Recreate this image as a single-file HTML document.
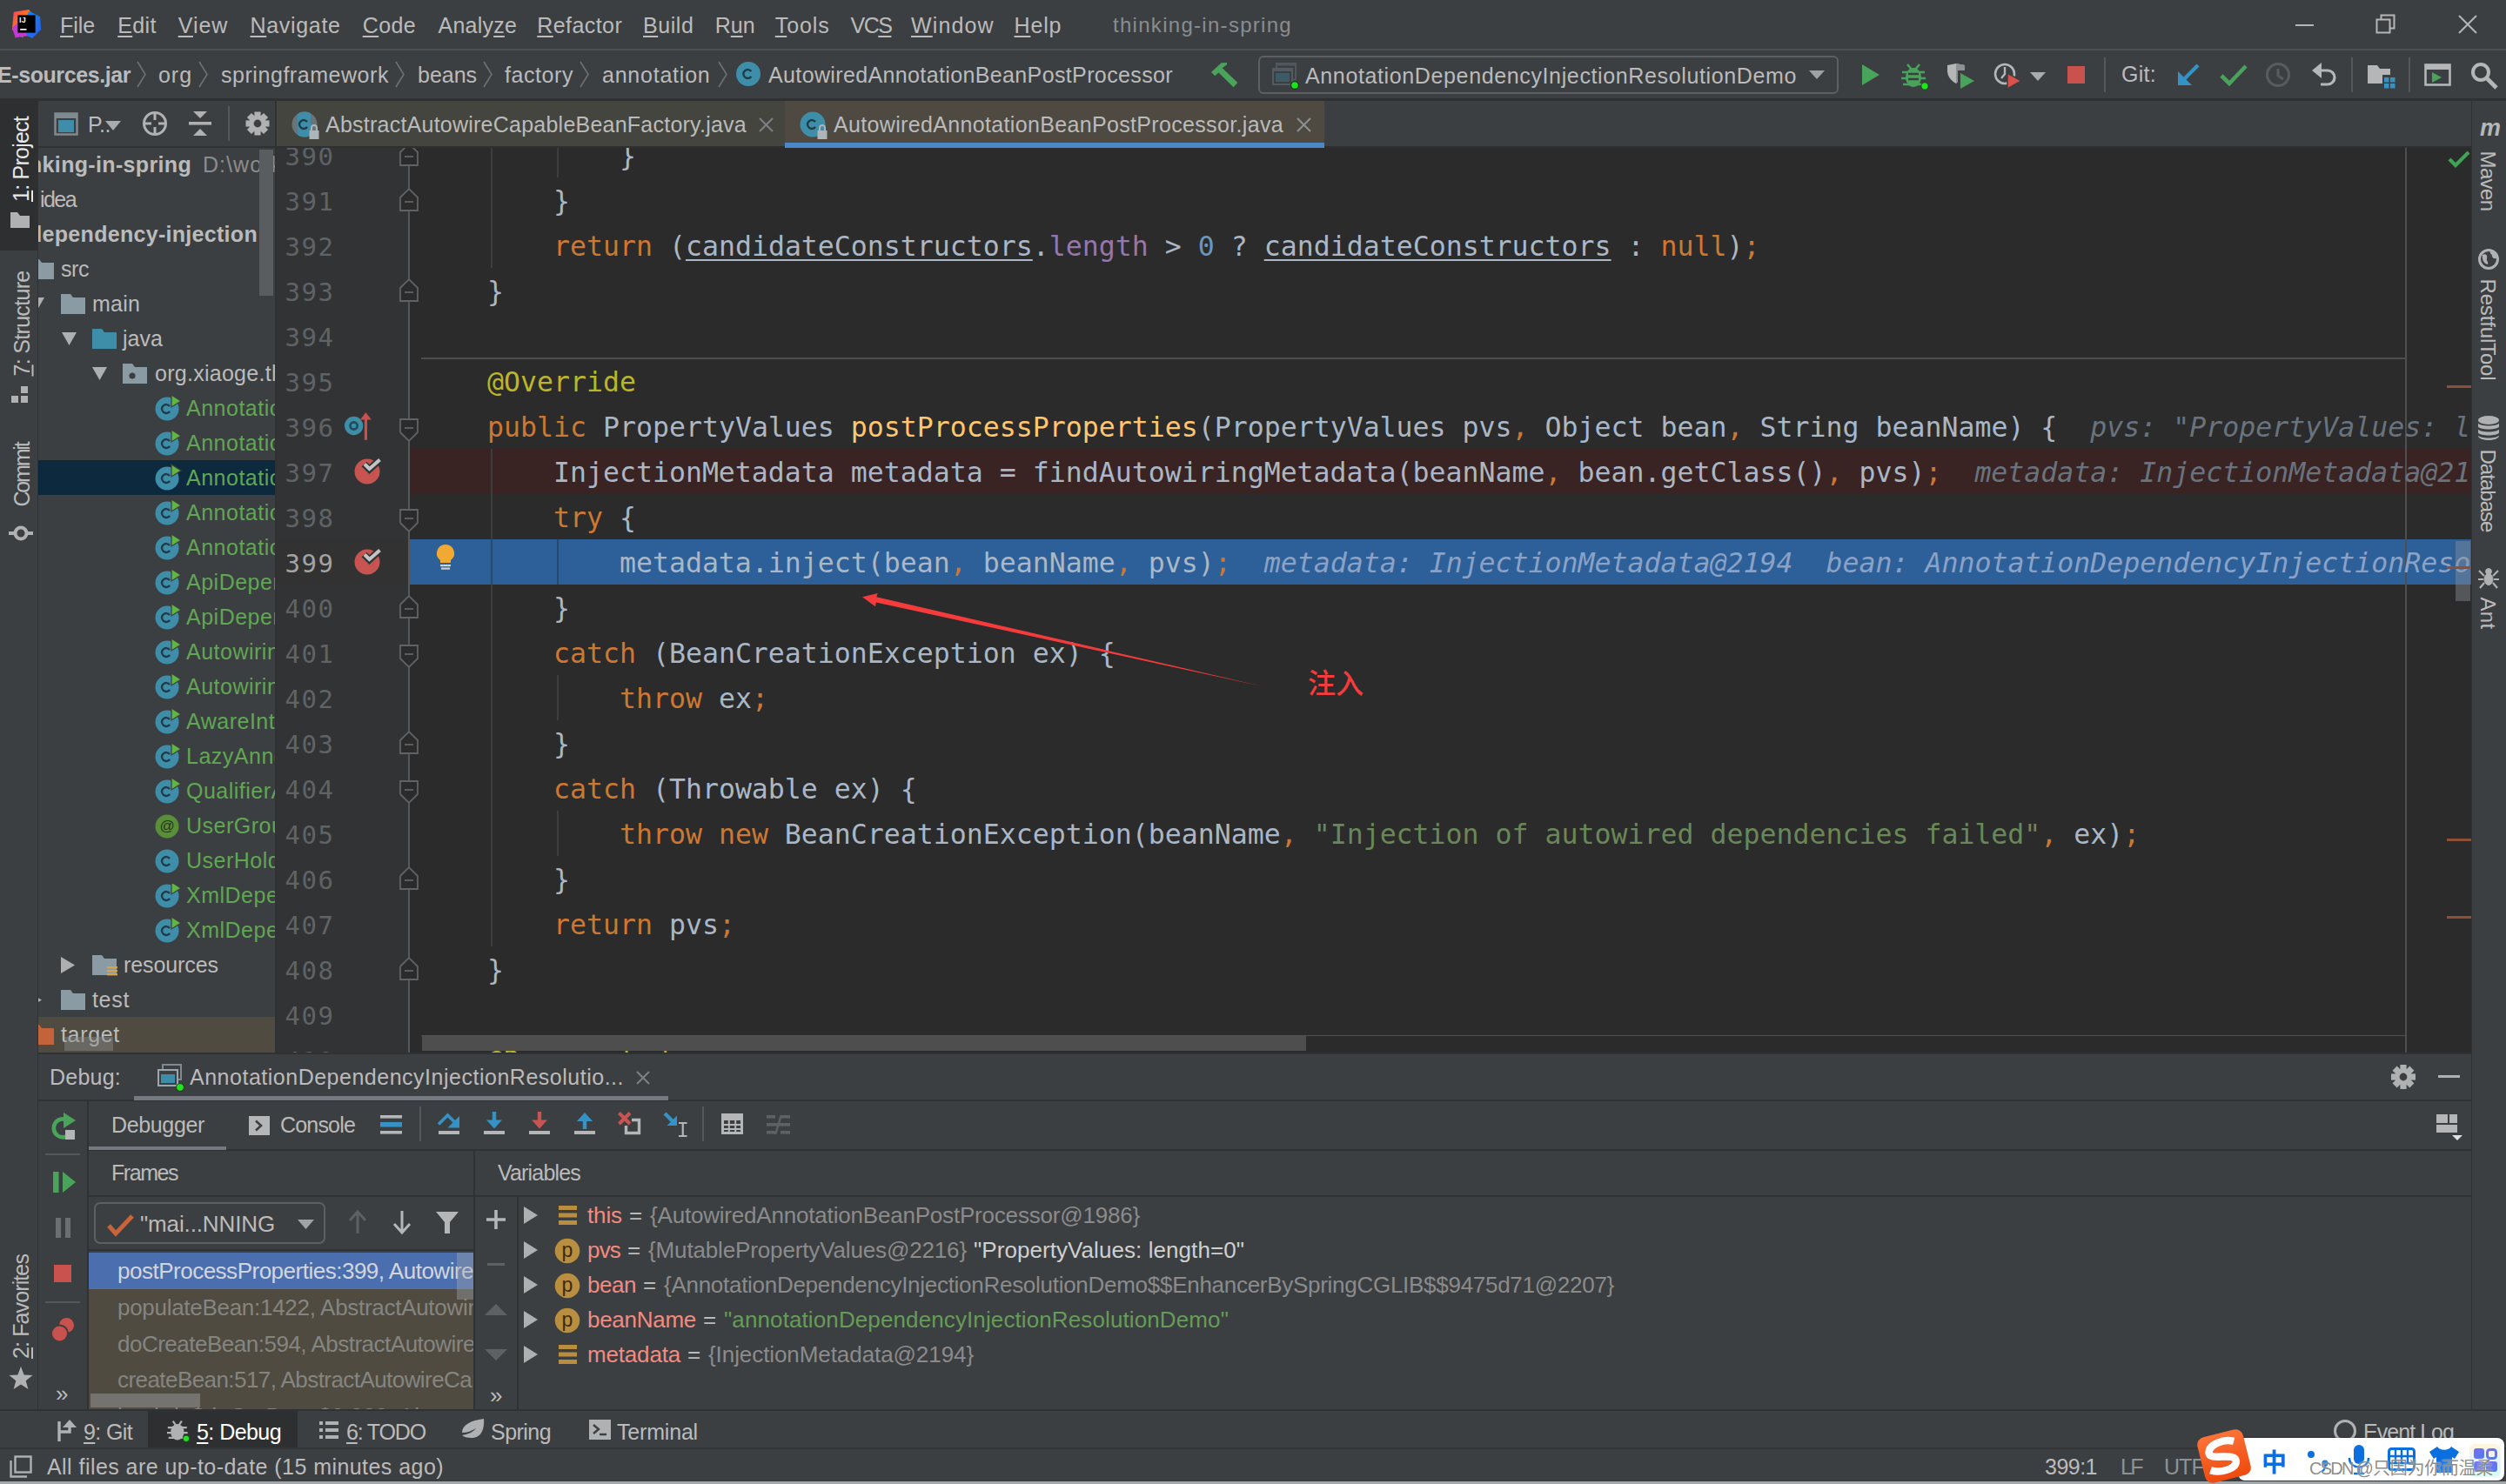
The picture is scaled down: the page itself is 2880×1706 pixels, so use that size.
<!DOCTYPE html>
<html><head><meta charset="utf-8"><title>IDE</title><style>
html,body{margin:0;padding:0;background:#3c3f41;}
body{width:2880px;height:1706px;position:relative;overflow:hidden;font-family:'Liberation Sans','Noto Sans CJK SC',sans-serif;}
body div,body svg,body span.t{position:absolute;}
span.t{white-space:pre;line-height:1;}
.clip > *{position:absolute;}
pre.c{position:absolute;margin:0;font-family:'DejaVu Sans Mono','Liberation Mono',monospace;font-size:31.56px;line-height:52px;height:52px;color:#a9b7c6;white-space:pre;letter-spacing:0;}
.k{color:#cc7832}.s{color:#6a8759}.n{color:#6897bb}.a{color:#bbb529}.m{color:#ffc66d}.fd{color:#9876aa}
.u{text-decoration:underline;text-decoration-thickness:1.6px;text-underline-offset:3.5px}

.h{color:#69737e;font-style:italic}.hx{color:#8aa2c6;font-style:italic}
</style></head><body>
<div style="left:0px;top:0px;width:2880px;height:1706px;background:#3c3f41;"></div>
<div style="left:0px;top:56px;width:2880px;height:2px;background:#4d5052;"></div>
<div style="left:0px;top:113px;width:2880px;height:3px;background:#2e3032;"></div>
<svg style="left:13px;top:10px;" width="35" height="35" viewBox="0 0 38 38">
<defs><linearGradient id="lg1" x1="0" y1="0" x2="1" y2="1"><stop offset="0" stop-color="#fc3d6f"/><stop offset=".45" stop-color="#f97a12"/><stop offset="1" stop-color="#b74af7"/></linearGradient>
<linearGradient id="lg2" x1="0" y1="0" x2="1" y2="1"><stop offset="0" stop-color="#0b8dfc"/><stop offset="1" stop-color="#2b5be8"/></linearGradient></defs>
<polygon points="3,4 22,1 30,12 14,36 1,26" fill="url(#lg1)"/>
<polygon points="22,3 36,10 37,26 26,37 12,30" fill="url(#lg2)"/>
<polygon points="1,24 12,14 20,34 5,36" fill="#c03bd0"/>
<rect x="8" y="8" width="22" height="22" fill="#000"/>
<rect x="11" y="25" width="8" height="1.8" fill="#fff"/>
</svg>
<span class="t" style="left:22px;top:19px;font-size:9px;font-weight:700;color:#fff;letter-spacing:0.3px">IJ</span>
<span class="t f" style="left:69.1px;top:16.94px;font-size:25px;color:#bbbbbb;letter-spacing:-0.099px;"><u style="text-underline-offset:3px;text-decoration-thickness:2px">F</u>ile</span>
<span class="t f" style="left:135.2px;top:16.94px;font-size:25px;color:#bbbbbb;letter-spacing:0.352px;"><u style="text-underline-offset:3px;text-decoration-thickness:2px">E</u>dit</span>
<span class="t f" style="left:204.7px;top:16.94px;font-size:25px;color:#bbbbbb;letter-spacing:0.987px;"><u style="text-underline-offset:3px;text-decoration-thickness:2px">V</u>iew</span>
<span class="t f" style="left:287.5px;top:16.94px;font-size:25px;color:#bbbbbb;letter-spacing:0.689px;"><u style="text-underline-offset:3px;text-decoration-thickness:2px">N</u>avigate</span>
<span class="t f" style="left:416.7px;top:16.94px;font-size:25px;color:#bbbbbb;letter-spacing:0.380px;"><u style="text-underline-offset:3px;text-decoration-thickness:2px">C</u>ode</span>
<span class="t f" style="left:503.5px;top:16.94px;font-size:25px;color:#bbbbbb;letter-spacing:0.221px;">Analy<u style="text-underline-offset:3px;text-decoration-thickness:2px">z</u>e</span>
<span class="t f" style="left:617.3px;top:16.94px;font-size:25px;color:#bbbbbb;letter-spacing:0.425px;"><u style="text-underline-offset:3px;text-decoration-thickness:2px">R</u>efactor</span>
<span class="t f" style="left:739px;top:16.94px;font-size:25px;color:#bbbbbb;letter-spacing:0.558px;"><u style="text-underline-offset:3px;text-decoration-thickness:2px">B</u>uild</span>
<span class="t f" style="left:821.8px;top:16.94px;font-size:25px;color:#bbbbbb;letter-spacing:-0.058px;">R<u style="text-underline-offset:3px;text-decoration-thickness:2px">u</u>n</span>
<span class="t f" style="left:890.8px;top:16.94px;font-size:25px;color:#bbbbbb;letter-spacing:0.905px;"><u style="text-underline-offset:3px;text-decoration-thickness:2px">T</u>ools</span>
<span class="t f" style="left:977.6px;top:16.94px;font-size:25px;color:#bbbbbb;letter-spacing:-1.541px;">VC<u style="text-underline-offset:3px;text-decoration-thickness:2px">S</u></span>
<span class="t f" style="left:1047px;top:16.94px;font-size:25px;color:#bbbbbb;letter-spacing:1.144px;"><u style="text-underline-offset:3px;text-decoration-thickness:2px">W</u>indow</span>
<span class="t f" style="left:1165.5px;top:16.94px;font-size:25px;color:#bbbbbb;letter-spacing:0.841px;"><u style="text-underline-offset:3px;text-decoration-thickness:2px">H</u>elp</span>
<span class="t f" style="left:1279px;top:16.78px;font-size:24px;color:#8a8d8f;letter-spacing:1.291px;">thinking-in-spring</span>
<div style="left:2638px;top:28px;width:21px;height:2px;background:#b4b6b7;"></div>
<svg style="left:2730px;top:16px;" width="24" height="24" viewBox="0 0 24 24"><rect x="1.5" y="6.5" width="15" height="15" fill="none" stroke="#b4b6b7" stroke-width="2"/><path d="M6.5 6V1.5H21.5V16.5H17" fill="none" stroke="#b4b6b7" stroke-width="2"/></svg>
<svg style="left:2824px;top:16px;" width="24" height="24" viewBox="0 0 24 24"><path d="M2 2L22 22M22 2L2 22" stroke="#b4b6b7" stroke-width="2" fill="none"/></svg>
<span class="t f" style="left:-3px;top:73.94px;font-size:25px;color:#bbbbbb;font-weight:700;letter-spacing:-0.417px;">E-sources.jar</span>
<svg style="left:157px;top:70px;" width="12" height="31" viewBox="0 0 12 31"><path d="M1 1L10 15.5L1 30" stroke="#6e7173" stroke-width="1.6" fill="none"/></svg>
<svg style="left:228px;top:70px;" width="12" height="31" viewBox="0 0 12 31"><path d="M1 1L10 15.5L1 30" stroke="#6e7173" stroke-width="1.6" fill="none"/></svg>
<svg style="left:454px;top:70px;" width="12" height="31" viewBox="0 0 12 31"><path d="M1 1L10 15.5L1 30" stroke="#6e7173" stroke-width="1.6" fill="none"/></svg>
<svg style="left:555px;top:70px;" width="12" height="31" viewBox="0 0 12 31"><path d="M1 1L10 15.5L1 30" stroke="#6e7173" stroke-width="1.6" fill="none"/></svg>
<svg style="left:666px;top:70px;" width="12" height="31" viewBox="0 0 12 31"><path d="M1 1L10 15.5L1 30" stroke="#6e7173" stroke-width="1.6" fill="none"/></svg>
<svg style="left:825px;top:70px;" width="12" height="31" viewBox="0 0 12 31"><path d="M1 1L10 15.5L1 30" stroke="#6e7173" stroke-width="1.6" fill="none"/></svg>
<span class="t f" style="left:182px;top:73.94px;font-size:25px;color:#bbbbbb;letter-spacing:0.953px;">org</span>
<span class="t f" style="left:254px;top:73.94px;font-size:25px;color:#bbbbbb;letter-spacing:0.548px;">springframework</span>
<span class="t f" style="left:480px;top:73.94px;font-size:25px;color:#bbbbbb;letter-spacing:-0.025px;">beans</span>
<span class="t f" style="left:580px;top:73.94px;font-size:25px;color:#bbbbbb;letter-spacing:0.567px;">factory</span>
<span class="t f" style="left:692px;top:73.94px;font-size:25px;color:#bbbbbb;letter-spacing:0.772px;">annotation</span>
<svg style="left:844px;top:69px;" width="36" height="36" viewBox="0 0 36 36"><circle cx="16.0" cy="16.0" r="14.0" fill="#3e8ea9"/><path d="M19.34 12.99A5 5 0 1 0 19.34 19.01" fill="none" stroke="#1f3b47" stroke-width="2.3"/></svg>
<span class="t f" style="left:883px;top:73.94px;font-size:25px;color:#bbbbbb;letter-spacing:0.370px;">AutowiredAnnotationBeanPostProcessor</span>
<svg style="left:1386px;top:66px;" width="40" height="38" viewBox="0 0 40 38"><polygon points="6,17 17.5,6.2 24,6 24,8.2 18.8,12.2 36.3,29 31.5,34.2 14.5,17.5 10.3,21.3" fill="#4aa35a"/></svg>
<div style="left:1446px;top:64px;width:663px;height:40px;border:2px solid #5d6062;border-radius:6px;box-sizing:content-box"></div>
<svg style="left:1460px;top:70px;" width="36" height="36" viewBox="0 0 36 36"><rect x="7" y="3" width="22" height="18.500" fill="none" stroke="#4e575b" stroke-width="2"/><rect x="6" y="2" width="24" height="3.600" fill="#4e575b"/><rect x="2" y="8" width="24" height="20" fill="#525b5f"/><rect x="4" y="12" width="20" height="14" fill="#3c3f41"/><rect x="6" y="14" width="16" height="10" fill="#3e5a66"/><circle cx="28" cy="28" r="4.400" fill="#14e714" stroke="#223322" stroke-width="1.200"/></svg>
<span class="t f" style="left:1500px;top:75.34px;font-size:25px;color:#bbbbbb;letter-spacing:0.631px;">AnnotationDependencyInjectionResolutionDemo</span>
<svg style="left:2078px;top:80px;" width="20" height="12" viewBox="0 0 20 12"><polygon points="1,1 19,1 10,11" fill="#a0a3a5"/></svg>
<svg style="left:2138px;top:73px;" width="24" height="26" viewBox="0 0 24 26"><polygon points="2,1 22,13 2,25" fill="#4aa35a"/></svg>
<svg style="left:2184px;top:70px;" width="34" height="34" viewBox="0 0 34 34"><g fill="#4aa35a"><ellipse cx="15" cy="19" rx="9" ry="11"/><path d="M8 4l5 6M22 4l-5 6" stroke="#4aa35a" stroke-width="2.6" fill="none"/>
<path d="M2 13h8M20 13h8M1 20h8M21 20h8M3 27h8M19 27h8" stroke="#4aa35a" stroke-width="2.6"/></g>
<path d="M9 15h12M9 21h12" stroke="#3c3f41" stroke-width="2.4"/><circle cx="28" cy="29" r="4.2" fill="#1fe51f" stroke="#1f3a1f" stroke-width="1"/></svg>
<svg style="left:2236px;top:72px;" width="36" height="32" viewBox="0 0 36 32"><path d="M2 3L12 1L22 3V8H14V22L12 24C5 20 2 15 2 9Z" fill="#b4b6b7"/><path d="M12 4V21C8 18 6 14 6 9V5Z" fill="#3c3f41" opacity="0"/><path d="M12 1L22 3V9H14V22L12 24Z" fill="#8e9192"/><polygon points="17,12 33,21 17,30" fill="#4aa35a"/></svg>
<svg style="left:2290px;top:70px;" width="36" height="34" viewBox="0 0 36 34"><circle cx="14" cy="15" r="11" fill="none" stroke="#b4b6b7" stroke-width="2.6"/><path d="M14 7v8l-4 5" stroke="#b4b6b7" stroke-width="2.4" fill="none"/><polygon points="17,14 33,23 17,32" fill="#d9504c" stroke="#3c3f41" stroke-width="1.5"/></svg>
<svg style="left:2333px;top:83px;" width="18" height="10" viewBox="0 0 18 10"><polygon points="0,0 18,0 9,10" fill="#a9acae"/></svg>
<div style="left:2376px;top:76px;width:20px;height:20px;background:#c9514e;"></div>
<div style="left:2418px;top:66px;width:2px;height:40px;background:#55585a;"></div>
<span class="t f" style="left:2438px;top:73.34px;font-size:25px;color:#bbbbbb;letter-spacing:0.273px;">Git:</span>
<svg style="left:2500px;top:72px;" width="30" height="28" viewBox="0 0 30 28"><path d="M26 3L6 23" stroke="#3592c4" stroke-width="4.2" fill="none"/><polygon points="3,26 3,10 19,26" fill="#3592c4"/></svg>
<svg style="left:2550px;top:72px;" width="34" height="28" viewBox="0 0 34 28"><path d="M3 15L12 24L31 4" stroke="#4aa35a" stroke-width="4.6" fill="none"/></svg>
<svg style="left:2602px;top:70px;" width="32" height="32" viewBox="0 0 32 32"><circle cx="16" cy="16" r="12.5" fill="none" stroke="#595c5e" stroke-width="3"/><path d="M16 9v8l6 4" stroke="#595c5e" stroke-width="3" fill="none"/></svg>
<svg style="left:2656px;top:70px;" width="32" height="32" viewBox="0 0 32 32"><path d="M6 11H19a8 8 0 0 1 0 16H11" fill="none" stroke="#b4b6b7" stroke-width="3.2"/><polygon points="1,11 12,2 12,20" fill="#b4b6b7"/></svg>
<div style="left:2702px;top:66px;width:2px;height:40px;background:#55585a;"></div>
<svg style="left:2720px;top:72px;" width="34" height="30" viewBox="0 0 34 30"><path d="M1 3H12L15 7H27V14H18V24H1Z" fill="#b4b6b7"/><rect x="20" y="17" width="5.5" height="5.5" fill="#3592c4"/><rect x="27" y="17" width="5.5" height="5.5" fill="#3592c4"/><rect x="20" y="24" width="5.5" height="5.5" fill="#3592c4"/><rect x="27" y="24" width="5.5" height="5.5" fill="#3592c4"/></svg>
<div style="left:2768px;top:66px;width:2px;height:40px;background:#55585a;"></div>
<svg style="left:2786px;top:72px;" width="32" height="28" viewBox="0 0 32 28"><rect x="1.5" y="2.5" width="28" height="23" fill="none" stroke="#b4b6b7" stroke-width="2.6"/><rect x="1" y="2" width="29" height="6" fill="#b4b6b7"/><polygon points="9,11 20,17 9,23" fill="#4aa35a"/></svg>
<svg style="left:2838px;top:70px;" width="34" height="34" viewBox="0 0 34 34"><circle cx="13" cy="13" r="9" fill="none" stroke="#b4b6b7" stroke-width="4"/><path d="M20 20L31 31" stroke="#b4b6b7" stroke-width="4.6"/></svg>
<div style="left:0px;top:116px;width:43px;height:1506px;background:#3c3f41;"></div>
<div style="left:43px;top:116px;width:1px;height:1506px;background:#2f3133;"></div>
<div style="left:0px;top:116px;width:43px;height:172px;background:#2d2f31;"></div>
<div style="left:-25.0px;top:163.0px;width:98px;height:40px;transform:rotate(-90deg);transform-origin:50% 50%">
<span class="t f" style="left:0px;top:8.34px;font-size:25px;color:#e8e8e8;letter-spacing:-0.761px;"><u style="text-underline-offset:3px;text-decoration-thickness:2px">1</u>: Project</span>
</div>
<svg style="left:12px;top:244px;" width="22" height="18" viewBox="0 0 22 18"><path d="M0 0H8L11 4H22V18H0Z" fill="#afb1b3"/></svg>
<div style="left:-36.5px;top:351.5px;width:121px;height:40px;transform:rotate(-90deg);transform-origin:50% 50%">
<span class="t f" style="left:0px;top:8.34px;font-size:25px;color:#bbbbbb;letter-spacing:-0.686px;"><u style="text-underline-offset:3px;text-decoration-thickness:2px">7</u>: Structure</span>
</div>
<svg style="left:13px;top:444px;" width="20" height="20" viewBox="0 0 20 20"><rect x="11" y="0" width="8" height="8" fill="#afb1b3"/><rect x="0" y="11" width="8" height="8" fill="#afb1b3"/><rect x="11" y="11" width="8" height="8" fill="#afb1b3"/></svg>
<div style="left:-12.5px;top:525.5px;width:73px;height:40px;transform:rotate(-90deg);transform-origin:50% 50%">
<span class="t f" style="left:0px;top:8.34px;font-size:25px;color:#bbbbbb;letter-spacing:-2.185px;">Commit</span>
</div>
<svg style="left:10px;top:599px;transform:rotate(0deg)" width="28" height="28" viewBox="0 0 28 28"><circle cx="14" cy="14" r="6.5" fill="none" stroke="#afb1b3" stroke-width="4"/><path d="M0 14H7M21 14H28" stroke="#afb1b3" stroke-width="4"/></svg>
<div style="left:-36.0px;top:1482.0px;width:120px;height:40px;transform:rotate(-90deg);transform-origin:50% 50%">
<span class="t f" style="left:0px;top:8.34px;font-size:25px;color:#bbbbbb;letter-spacing:-0.884px;"><u style="text-underline-offset:3px;text-decoration-thickness:2px">2</u>: Favorites</span>
</div>
<svg style="left:10px;top:1571px;" width="28" height="27" viewBox="0 0 28 27"><polygon points="14,0 17.6,9.5 27.5,10 19.7,16.3 22.4,26 14,20.4 5.6,26 8.3,16.3 0.5,10 10.4,9.5" fill="#afb1b3"/></svg>
<div style="left:316px;top:116px;width:2px;height:1094px;background:#2f3133;"></div>
<div style="left:44px;top:168px;width:272px;height:2px;background:#2f3133;"></div>
<svg style="left:62px;top:129px;" width="28" height="28" viewBox="0 0 28 28"><rect x="1.5" y="1.5" width="25" height="24" fill="none" stroke="#7f8b91" stroke-width="2.5"/><rect x="1" y="1" width="26" height="6" fill="#7f8b91"/><rect x="5" y="9" width="18" height="14" fill="#3e8ea9"/></svg>
<span class="t f" style="left:101px;top:131.34px;font-size:25px;color:#bbbbbb;letter-spacing:-0.448px;">P..</span>
<svg style="left:121px;top:139px;" width="18" height="11" viewBox="0 0 18 11"><polygon points="0,0 18,0 9,11" fill="#a9acae"/></svg>
<svg style="left:163px;top:127px;" width="30" height="30" viewBox="0 0 30 30"><circle cx="15" cy="15" r="12.5" fill="none" stroke="#afb1b3" stroke-width="3"/><path d="M15 2V11M15 19V28M2 15H11M19 15H28" stroke="#afb1b3" stroke-width="3"/></svg>
<svg style="left:217px;top:128px;" width="26" height="28" viewBox="0 0 26 28"><rect x="0" y="12" width="26" height="3.6" fill="#afb1b3"/><polygon points="5,0 21,0 13,8" fill="#afb1b3"/><polygon points="5,28 21,28 13,20" fill="#afb1b3"/></svg>
<div style="left:262px;top:122px;width:2px;height:40px;background:#55585a;"></div>
<svg style="left:282px;top:128px;" width="28" height="28" viewBox="0 0 28 28"><g transform="translate(14 14)"><g fill="#afb1b3"><rect x="-3.6" y="-13.5" width="7.2" height="8" transform="rotate(0)"/><rect x="-3.6" y="-13.5" width="7.2" height="8" transform="rotate(45)"/><rect x="-3.6" y="-13.5" width="7.2" height="8" transform="rotate(90)"/><rect x="-3.6" y="-13.5" width="7.2" height="8" transform="rotate(135)"/><rect x="-3.6" y="-13.5" width="7.2" height="8" transform="rotate(180)"/><rect x="-3.6" y="-13.5" width="7.2" height="8" transform="rotate(225)"/><rect x="-3.6" y="-13.5" width="7.2" height="8" transform="rotate(270)"/><rect x="-3.6" y="-13.5" width="7.2" height="8" transform="rotate(315)"/></g><circle r="9.6" fill="#afb1b3"/><circle r="4.4" fill="#3c3f41"/></g></svg>
<div class="clip" style="left:44px;top:170px;width:272px;height:1040px;overflow:hidden;">
<div style="left:0px;top:359px;width:272px;height:40px;background:#0d293e;"></div>
<div style="left:0px;top:999px;width:272px;height:42px;background:#4f4b41;"></div>
<span class="t f" style="left:-11px;top:7.34px;font-size:25px;color:#bbbbbb;font-weight:700;letter-spacing:0.339px;">nking-in-spring</span>
<span class="t f" style="left:189px;top:7.34px;font-size:25px;color:#8c8c8c;letter-spacing:1.038px;">D:\work</span>
<span class="t f" style="left:2px;top:47.34px;font-size:25px;color:#bbbbbb;letter-spacing:-1.566px;">idea</span>
<span class="t f" style="left:-11px;top:87.34px;font-size:25px;color:#bbbbbb;font-weight:700;letter-spacing:0.301px;">dependency-injection</span>
<svg style="left:-10px;top:128px" width="30" height="24" viewBox="0 0 30 24"><path d="M0 0H11L14 4H28V23H0Z" fill="#8a9ba4"/></svg>
<span class="t f" style="left:26px;top:127.34px;font-size:25px;color:#bbbbbb;letter-spacing:-0.443px;">src</span>
<svg style="left:-10px;top:172px" width="18" height="16" viewBox="0 0 18 16"><polygon points="0,0 17,0 8.5,15" fill="#adafb0"/></svg>
<svg style="left:26px;top:168px" width="30" height="24" viewBox="0 0 30 24"><path d="M0 0H11L14 4H28V23H0Z" fill="#8a9ba4"/></svg>
<span class="t f" style="left:62px;top:167.34px;font-size:25px;color:#bbbbbb;letter-spacing:0.203px;">main</span>
<svg style="left:27px;top:212px" width="18" height="16" viewBox="0 0 18 16"><polygon points="0,0 17,0 8.5,15" fill="#adafb0"/></svg>
<svg style="left:62px;top:208px" width="30" height="24" viewBox="0 0 30 24"><path d="M0 0H11L14 4H28V23H0Z" fill="#3e8ea9"/></svg>
<span class="t f" style="left:97px;top:207.34px;font-size:25px;color:#bbbbbb;letter-spacing:0.031px;">java</span>
<svg style="left:62px;top:252px" width="18" height="16" viewBox="0 0 18 16"><polygon points="0,0 17,0 8.5,15" fill="#adafb0"/></svg>
<svg style="left:97px;top:248px" width="30" height="24" viewBox="0 0 30 24"><path d="M0 0H11L14 4H28V23H0Z" fill="#8a9ba4"/><circle cx="11" cy="14" r="3.6" fill="#3c3f41"/></svg>
<span class="t f" style="left:134px;top:247.34px;font-size:25px;color:#bbbbbb;letter-spacing:0.270px;">org.xiaoge.thinking</span>
<svg style="left:132px;top:283px" width="36" height="36" viewBox="0 0 36 36"><circle cx="16" cy="17" r="13.5" fill="#3e8ea9"/><path d="M19.04 13.99A5 5 0 1 0 19.04 20.01" fill="none" stroke="#1f3b47" stroke-width="2.3"/><polygon points="21,1 32,8 21,15" fill="#62b543" stroke="#3c3f41" stroke-width="1.2"/></svg>
<span class="t f" style="left:170px;top:287.34px;font-size:25px;color:#60a653;letter-spacing:0.500px;">AnnotationDependencyConstructorInjectionDemo</span>
<svg style="left:132px;top:323px" width="36" height="36" viewBox="0 0 36 36"><circle cx="16" cy="17" r="13.5" fill="#3e8ea9"/><path d="M19.04 13.99A5 5 0 1 0 19.04 20.01" fill="none" stroke="#1f3b47" stroke-width="2.3"/><polygon points="21,1 32,8 21,15" fill="#62b543" stroke="#3c3f41" stroke-width="1.2"/></svg>
<span class="t f" style="left:170px;top:327.34px;font-size:25px;color:#60a653;letter-spacing:0.500px;">AnnotationDependencyFieldInjectionDemo</span>
<svg style="left:132px;top:363px" width="36" height="36" viewBox="0 0 36 36"><circle cx="16" cy="17" r="13.5" fill="#3e8ea9"/><path d="M19.04 13.99A5 5 0 1 0 19.04 20.01" fill="none" stroke="#1f3b47" stroke-width="2.3"/><polygon points="21,1 32,8 21,15" fill="#62b543" stroke="#3c3f41" stroke-width="1.2"/></svg>
<span class="t f" style="left:170px;top:367.34px;font-size:25px;color:#60a653;letter-spacing:0.500px;">AnnotationDependencyInjectionResolutionDemo</span>
<svg style="left:132px;top:403px" width="36" height="36" viewBox="0 0 36 36"><circle cx="16" cy="17" r="13.5" fill="#3e8ea9"/><path d="M19.04 13.99A5 5 0 1 0 19.04 20.01" fill="none" stroke="#1f3b47" stroke-width="2.3"/><polygon points="21,1 32,8 21,15" fill="#62b543" stroke="#3c3f41" stroke-width="1.2"/></svg>
<span class="t f" style="left:170px;top:407.34px;font-size:25px;color:#60a653;letter-spacing:0.500px;">AnnotationDependencyMethodInjectionDemo</span>
<svg style="left:132px;top:443px" width="36" height="36" viewBox="0 0 36 36"><circle cx="16" cy="17" r="13.5" fill="#3e8ea9"/><path d="M19.04 13.99A5 5 0 1 0 19.04 20.01" fill="none" stroke="#1f3b47" stroke-width="2.3"/><polygon points="21,1 32,8 21,15" fill="#62b543" stroke="#3c3f41" stroke-width="1.2"/></svg>
<span class="t f" style="left:170px;top:447.34px;font-size:25px;color:#60a653;letter-spacing:0.500px;">AnnotationDependencySetterInjectionDemo</span>
<svg style="left:132px;top:483px" width="36" height="36" viewBox="0 0 36 36"><circle cx="16" cy="17" r="13.5" fill="#3e8ea9"/><path d="M19.04 13.99A5 5 0 1 0 19.04 20.01" fill="none" stroke="#1f3b47" stroke-width="2.3"/><polygon points="21,1 32,8 21,15" fill="#62b543" stroke="#3c3f41" stroke-width="1.2"/></svg>
<span class="t f" style="left:170px;top:487.34px;font-size:25px;color:#60a653;letter-spacing:0.500px;">ApiDependencyConstructorInjectionDemo</span>
<svg style="left:132px;top:523px" width="36" height="36" viewBox="0 0 36 36"><circle cx="16" cy="17" r="13.5" fill="#3e8ea9"/><path d="M19.04 13.99A5 5 0 1 0 19.04 20.01" fill="none" stroke="#1f3b47" stroke-width="2.3"/><polygon points="21,1 32,8 21,15" fill="#62b543" stroke="#3c3f41" stroke-width="1.2"/></svg>
<span class="t f" style="left:170px;top:527.34px;font-size:25px;color:#60a653;letter-spacing:0.500px;">ApiDependencySetterInjectionDemo</span>
<svg style="left:132px;top:563px" width="36" height="36" viewBox="0 0 36 36"><circle cx="16" cy="17" r="13.5" fill="#3e8ea9"/><path d="M19.04 13.99A5 5 0 1 0 19.04 20.01" fill="none" stroke="#1f3b47" stroke-width="2.3"/><polygon points="21,1 32,8 21,15" fill="#62b543" stroke="#3c3f41" stroke-width="1.2"/></svg>
<span class="t f" style="left:170px;top:567.34px;font-size:25px;color:#60a653;letter-spacing:0.500px;">AutowiringByNameDependencySetterInjectionDemo</span>
<svg style="left:132px;top:603px" width="36" height="36" viewBox="0 0 36 36"><circle cx="16" cy="17" r="13.5" fill="#3e8ea9"/><path d="M19.04 13.99A5 5 0 1 0 19.04 20.01" fill="none" stroke="#1f3b47" stroke-width="2.3"/><polygon points="21,1 32,8 21,15" fill="#62b543" stroke="#3c3f41" stroke-width="1.2"/></svg>
<span class="t f" style="left:170px;top:607.34px;font-size:25px;color:#60a653;letter-spacing:0.500px;">AutowiringConstructorDependencyInjectionDemo</span>
<svg style="left:132px;top:643px" width="36" height="36" viewBox="0 0 36 36"><circle cx="16" cy="17" r="13.5" fill="#3e8ea9"/><path d="M19.04 13.99A5 5 0 1 0 19.04 20.01" fill="none" stroke="#1f3b47" stroke-width="2.3"/><polygon points="21,1 32,8 21,15" fill="#62b543" stroke="#3c3f41" stroke-width="1.2"/></svg>
<span class="t f" style="left:170px;top:647.34px;font-size:25px;color:#60a653;letter-spacing:0.500px;">AwareInterfaceDependencyInjectionDemo</span>
<svg style="left:132px;top:683px" width="36" height="36" viewBox="0 0 36 36"><circle cx="16" cy="17" r="13.5" fill="#3e8ea9"/><path d="M19.04 13.99A5 5 0 1 0 19.04 20.01" fill="none" stroke="#1f3b47" stroke-width="2.3"/><polygon points="21,1 32,8 21,15" fill="#62b543" stroke="#3c3f41" stroke-width="1.2"/></svg>
<span class="t f" style="left:170px;top:687.34px;font-size:25px;color:#60a653;letter-spacing:0.500px;">LazyAnnotationDependencyInjectionDemo</span>
<svg style="left:132px;top:723px" width="36" height="36" viewBox="0 0 36 36"><circle cx="16" cy="17" r="13.5" fill="#3e8ea9"/><path d="M19.04 13.99A5 5 0 1 0 19.04 20.01" fill="none" stroke="#1f3b47" stroke-width="2.3"/><polygon points="21,1 32,8 21,15" fill="#62b543" stroke="#3c3f41" stroke-width="1.2"/></svg>
<span class="t f" style="left:170px;top:727.34px;font-size:25px;color:#60a653;letter-spacing:0.500px;">QualifierAnnotationDependencyInjectionDemo</span>
<svg style="left:132px;top:763px" width="36" height="36" viewBox="0 0 36 36"><circle cx="16" cy="17" r="13.5" fill="#5a8f3a"/></svg>
<span class="t" style="left:139.4px;top:770.5px;font-size:17px;color:#243318">@</span>
<span class="t f" style="left:170px;top:767.34px;font-size:25px;color:#60a653;letter-spacing:0.500px;">UserGroup</span>
<svg style="left:132px;top:803px" width="36" height="36" viewBox="0 0 36 36"><circle cx="16" cy="17" r="13.5" fill="#3e8ea9"/><path d="M19.04 13.99A5 5 0 1 0 19.04 20.01" fill="none" stroke="#1f3b47" stroke-width="2.3"/></svg>
<span class="t f" style="left:170px;top:807.34px;font-size:25px;color:#60a653;letter-spacing:0.500px;">UserHolder</span>
<svg style="left:132px;top:843px" width="36" height="36" viewBox="0 0 36 36"><circle cx="16" cy="17" r="13.5" fill="#3e8ea9"/><path d="M19.04 13.99A5 5 0 1 0 19.04 20.01" fill="none" stroke="#1f3b47" stroke-width="2.3"/><polygon points="21,1 32,8 21,15" fill="#62b543" stroke="#3c3f41" stroke-width="1.2"/></svg>
<span class="t f" style="left:170px;top:847.34px;font-size:25px;color:#60a653;letter-spacing:0.500px;">XmlDependencyConstructorInjectionDemo</span>
<svg style="left:132px;top:883px" width="36" height="36" viewBox="0 0 36 36"><circle cx="16" cy="17" r="13.5" fill="#3e8ea9"/><path d="M19.04 13.99A5 5 0 1 0 19.04 20.01" fill="none" stroke="#1f3b47" stroke-width="2.3"/><polygon points="21,1 32,8 21,15" fill="#62b543" stroke="#3c3f41" stroke-width="1.2"/></svg>
<span class="t f" style="left:170px;top:887.34px;font-size:25px;color:#60a653;letter-spacing:0.500px;">XmlDependencySetterInjectionDemo</span>
<svg style="left:26px;top:930px" width="18" height="20" viewBox="0 0 18 20"><polygon points="0,0 16,9.5 0,19" fill="#adafb0"/></svg>
<svg style="left:62px;top:928px" width="30" height="24" viewBox="0 0 30 24"><path d="M0 0H11L14 4H28V23H0Z" fill="#8a9ba4"/><g fill="#d9a343"><rect x="17" y="13" width="12" height="2.4"/><rect x="17" y="17" width="12" height="2.4"/><rect x="17" y="21" width="12" height="2.4"/></g></svg>
<span class="t f" style="left:98px;top:927.34px;font-size:25px;color:#bbbbbb;letter-spacing:-0.085px;">resources</span>
<svg style="left:-12px;top:970px" width="18" height="20" viewBox="0 0 18 20"><polygon points="0,0 16,9.5 0,19" fill="#adafb0"/></svg>
<svg style="left:26px;top:968px" width="30" height="24" viewBox="0 0 30 24"><path d="M0 0H11L14 4H28V23H0Z" fill="#8a9ba4"/></svg>
<span class="t f" style="left:62px;top:967.34px;font-size:25px;color:#bbbbbb;letter-spacing:0.676px;">test</span>
<svg style="left:-10px;top:1008px" width="30" height="24" viewBox="0 0 30 24"><path d="M0 0H11L14 4H28V23H0Z" fill="#c4633a"/></svg>
<span class="t f" style="left:26px;top:1007.34px;font-size:25px;color:#bbbbbb;letter-spacing:0.677px;">target</span>
<div style="left:254px;top:2px;width:16px;height:168px;background:#5a5d5f;"></div>
<div style="left:30px;top:1022px;width:56px;height:16px;background:rgba(140,140,140,0.45);"></div>
</div>
<div style="left:318px;top:116px;width:584px;height:52px;background:#45453f;"></div>
<div style="left:902px;top:116px;width:620px;height:52px;background:#4e4a41;"></div>
<div style="left:902px;top:164px;width:620px;height:5px;background:#4a88c7;"></div>
<div style="left:318px;top:168px;width:2522px;height:2px;background:#2e2f30;"></div>
<div style="left:902px;top:164px;width:620px;height:5.5px;background:#4a88c7;"></div>
<svg style="left:334px;top:127px;" width="36" height="36" viewBox="0 0 36 36"><defs><clipPath id="cpc"><circle cx="16" cy="16" r="14.5"/></clipPath></defs><circle cx="16" cy="16" r="14.5" fill="#6a7378"/><rect x="8" y="1" width="15" height="30" fill="#3e8ea9" clip-path="url(#cpc)"/><circle cx="16" cy="16" r="14.5" fill="none" stroke="#45453f" stroke-width="0"/><path d="M19.04 12.99A5 5 0 1 0 19.04 19.01" fill="none" stroke="#1f3b47" stroke-width="2.3"/><rect x="21.5" y="23" width="11" height="10" fill="#aeb5ba"/><path d="M24 23v-3a3 3 0 0 1 6 0v3" fill="none" stroke="#aeb5ba" stroke-width="2"/></svg>
<span class="t f" style="left:374px;top:130.94px;font-size:25px;color:#bbbbbb;letter-spacing:0.236px;">AbstractAutowireCapableBeanFactory.java</span>
<svg style="left:872px;top:135px;" width="17" height="17" viewBox="0 0 17 17"><path d="M1 1L16 16M16 1L1 16" stroke="#7d8183" stroke-width="2" fill="none"/></svg>
<svg style="left:919px;top:127px;" width="36" height="36" viewBox="0 0 36 36"><circle cx="15" cy="16" r="14.5" fill="#3e8ea9"/><path d="M18.04 12.99A5 5 0 1 0 18.04 19.01" fill="none" stroke="#1f3b47" stroke-width="2.3"/><rect x="20.5" y="23" width="11" height="10" fill="#aeb5ba"/><path d="M23 23v-3a3 3 0 0 1 6 0v3" fill="none" stroke="#aeb5ba" stroke-width="2"/></svg>
<span class="t f" style="left:958px;top:130.94px;font-size:25px;color:#bbbbbb;letter-spacing:0.339px;">AutowiredAnnotationBeanPostProcessor.java</span>
<svg style="left:1490px;top:135px;" width="17" height="17" viewBox="0 0 17 17"><path d="M1 1L16 16M16 1L1 16" stroke="#8d9193" stroke-width="2" fill="none"/></svg>
<div style="left:318px;top:170px;width:2522px;height:1040px;background:#2b2b2b;"></div>
<div class="clip" style="left:318px;top:170px;width:2522px;height:1040px;overflow:hidden;">
<div style="left:0px;top:0px;width:152px;height:1040px;background:#313335;"></div>
<div style="left:153px;top:346px;width:2369px;height:52px;background:#3a2323;"></div>
<div style="left:153px;top:450px;width:2369px;height:52px;background:#2d6099;"></div>
<div style="left:0px;top:450px;width:152px;height:52px;background:#323232;"></div>
<div style="left:166px;top:241px;width:2281px;height:2px;background:#4d4d4d;"></div>
<div style="left:2446px;top:0px;width:2px;height:1040px;background:#4f4f4f;"></div>
<div style="left:246px;top:-18px;width:2px;height:156px;background:#3d3d3d;"></div>
<div style="left:322px;top:-18px;width:2px;height:52px;background:#3d3d3d;"></div>
<div style="left:246px;top:346px;width:2px;height:104px;background:#3d3d3d;"></div>
<div style="left:246px;top:502px;width:2px;height:416px;background:#3d3d3d;"></div>
<div style="left:246px;top:450px;width:2px;height:52px;background:#27496f;"></div>
<div style="left:322px;top:450px;width:2px;height:52px;background:#27496f;"></div>
<div style="left:322px;top:606px;width:2px;height:52px;background:#3d3d3d;"></div>
<div style="left:322px;top:762px;width:2px;height:52px;background:#3d3d3d;"></div>
<div style="left:151px;top:0px;width:2px;height:1040px;background:#555759;"></div>
<svg style="left:141px;top:-6px" width="22" height="27" viewBox="0 0 22 27"><path d="M1 26V11L11 1.2L21 11V26Z" fill="#2b2b2b" stroke="#606366" stroke-width="1.8"/><path d="M6 16H16" stroke="#606366" stroke-width="1.8"/></svg>
<svg style="left:141px;top:46px" width="22" height="27" viewBox="0 0 22 27"><path d="M1 26V11L11 1.2L21 11V26Z" fill="#2b2b2b" stroke="#606366" stroke-width="1.8"/><path d="M6 16H16" stroke="#606366" stroke-width="1.8"/></svg>
<svg style="left:141px;top:150px" width="22" height="27" viewBox="0 0 22 27"><path d="M1 26V11L11 1.2L21 11V26Z" fill="#2b2b2b" stroke="#606366" stroke-width="1.8"/><path d="M6 16H16" stroke="#606366" stroke-width="1.8"/></svg>
<svg style="left:141px;top:514px" width="22" height="27" viewBox="0 0 22 27"><path d="M1 26V11L11 1.2L21 11V26Z" fill="#2b2b2b" stroke="#606366" stroke-width="1.8"/><path d="M6 16H16" stroke="#606366" stroke-width="1.8"/></svg>
<svg style="left:141px;top:670px" width="22" height="27" viewBox="0 0 22 27"><path d="M1 26V11L11 1.2L21 11V26Z" fill="#2b2b2b" stroke="#606366" stroke-width="1.8"/><path d="M6 16H16" stroke="#606366" stroke-width="1.8"/></svg>
<svg style="left:141px;top:826px" width="22" height="27" viewBox="0 0 22 27"><path d="M1 26V11L11 1.2L21 11V26Z" fill="#2b2b2b" stroke="#606366" stroke-width="1.8"/><path d="M6 16H16" stroke="#606366" stroke-width="1.8"/></svg>
<svg style="left:141px;top:930px" width="22" height="27" viewBox="0 0 22 27"><path d="M1 26V11L11 1.2L21 11V26Z" fill="#2b2b2b" stroke="#606366" stroke-width="1.8"/><path d="M6 16H16" stroke="#606366" stroke-width="1.8"/></svg>
<svg style="left:141px;top:310.5px" width="22" height="27" viewBox="0 0 22 27"><path d="M1 1H21V16L11 25.8L1 16Z" fill="#2b2b2b" stroke="#606366" stroke-width="1.8"/><path d="M6 11H16" stroke="#606366" stroke-width="1.8"/></svg>
<svg style="left:141px;top:414.5px" width="22" height="27" viewBox="0 0 22 27"><path d="M1 1H21V16L11 25.8L1 16Z" fill="#2b2b2b" stroke="#606366" stroke-width="1.8"/><path d="M6 11H16" stroke="#606366" stroke-width="1.8"/></svg>
<svg style="left:141px;top:570.5px" width="22" height="27" viewBox="0 0 22 27"><path d="M1 1H21V16L11 25.8L1 16Z" fill="#2b2b2b" stroke="#606366" stroke-width="1.8"/><path d="M6 11H16" stroke="#606366" stroke-width="1.8"/></svg>
<svg style="left:141px;top:726.5px" width="22" height="27" viewBox="0 0 22 27"><path d="M1 1H21V16L11 25.8L1 16Z" fill="#2b2b2b" stroke="#606366" stroke-width="1.8"/><path d="M6 11H16" stroke="#606366" stroke-width="1.8"/></svg>
<pre class="c" style="left:9.5px;top:-16.4px;color:#606366;font-size:29px;letter-spacing:1.54px">390</pre>
<pre class="c" style="left:9.5px;top:35.6px;color:#606366;font-size:29px;letter-spacing:1.54px">391</pre>
<pre class="c" style="left:9.5px;top:87.6px;color:#606366;font-size:29px;letter-spacing:1.54px">392</pre>
<pre class="c" style="left:9.5px;top:139.6px;color:#606366;font-size:29px;letter-spacing:1.54px">393</pre>
<pre class="c" style="left:9.5px;top:191.6px;color:#606366;font-size:29px;letter-spacing:1.54px">394</pre>
<pre class="c" style="left:9.5px;top:243.6px;color:#606366;font-size:29px;letter-spacing:1.54px">395</pre>
<pre class="c" style="left:9.5px;top:295.6px;color:#606366;font-size:29px;letter-spacing:1.54px">396</pre>
<pre class="c" style="left:9.5px;top:347.6px;color:#606366;font-size:29px;letter-spacing:1.54px">397</pre>
<pre class="c" style="left:9.5px;top:399.6px;color:#606366;font-size:29px;letter-spacing:1.54px">398</pre>
<pre class="c" style="left:9.5px;top:451.6px;color:#a4a3a3;font-size:29px;letter-spacing:1.54px">399</pre>
<pre class="c" style="left:9.5px;top:503.6px;color:#606366;font-size:29px;letter-spacing:1.54px">400</pre>
<pre class="c" style="left:9.5px;top:555.6px;color:#606366;font-size:29px;letter-spacing:1.54px">401</pre>
<pre class="c" style="left:9.5px;top:607.6px;color:#606366;font-size:29px;letter-spacing:1.54px">402</pre>
<pre class="c" style="left:9.5px;top:659.6px;color:#606366;font-size:29px;letter-spacing:1.54px">403</pre>
<pre class="c" style="left:9.5px;top:711.6px;color:#606366;font-size:29px;letter-spacing:1.54px">404</pre>
<pre class="c" style="left:9.5px;top:763.6px;color:#606366;font-size:29px;letter-spacing:1.54px">405</pre>
<pre class="c" style="left:9.5px;top:815.6px;color:#606366;font-size:29px;letter-spacing:1.54px">406</pre>
<pre class="c" style="left:9.5px;top:867.6px;color:#606366;font-size:29px;letter-spacing:1.54px">407</pre>
<pre class="c" style="left:9.5px;top:919.6px;color:#606366;font-size:29px;letter-spacing:1.54px">408</pre>
<pre class="c" style="left:9.5px;top:971.6px;color:#606366;font-size:29px;letter-spacing:1.54px">409</pre>
<pre class="c" style="left:9.5px;top:1023.6px;color:#606366;font-size:29px;letter-spacing:1.54px">410</pre>
<svg style="left:88px;top:354px" width="36" height="36" viewBox="0 0 36 36"><circle cx="16" cy="18" r="14.5" fill="#c75450"/><path d="M12.5 9.5L18.5 15.5L31 4" fill="none" stroke="#313335" stroke-width="8"/><path d="M13 9.5L18.5 15L30.5 4.5" fill="none" stroke="#c4c4c4" stroke-width="4"/></svg>
<svg style="left:88px;top:458px" width="36" height="36" viewBox="0 0 36 36"><circle cx="16" cy="18" r="14.5" fill="#c75450"/><path d="M12.5 9.5L18.5 15.5L31 4" fill="none" stroke="#313335" stroke-width="8"/><path d="M13 9.5L18.5 15L30.5 4.5" fill="none" stroke="#c4c4c4" stroke-width="4"/></svg>
<svg style="left:78px;top:302px" width="34" height="36" viewBox="0 0 34 36"><circle cx="10.6" cy="17.5" r="10.7" fill="#3e8ea9"/><circle cx="10.6" cy="17.5" r="4.1" fill="none" stroke="#1f4b5c" stroke-width="2.6"/><path d="M24.4 33.8V9" stroke="#c9504c" stroke-width="3.2"/><polygon points="18,10.4 30.800,10.4 24.4,2" fill="#c9504c"/></svg>
<svg style="left:183px;top:455px" width="22" height="30" viewBox="0 0 22 30"><path d="M11 1a10 10 0 0 1 6 18v3H5v-3A10 10 0 0 1 11 1Z" fill="#f2a932"/><rect x="5" y="24" width="12" height="2.2" fill="#d0d0d0"/><rect x="6" y="27.5" width="10" height="2.2" fill="#d0d0d0"/></svg>
<pre class="c" style="left:166px;top:-17.2px;">            }</pre>
<pre class="c" style="left:166px;top:34.8px;">        }</pre>
<pre class="c" style="left:166px;top:86.8px;">        <span class="k">return</span> (<span class="u">candidateConstructors</span>.<span class="fd">length</span> &gt; <span class="n">0</span> ? <span class="u">candidateConstructors</span> : <span class="k">null</span>)<span class="k">;</span></pre>
<pre class="c" style="left:166px;top:138.8px;">    }</pre>
<pre class="c" style="left:166px;top:242.8px;">    <span class="a">@Override</span></pre>
<pre class="c" style="left:166px;top:294.8px;">    <span class="k">public</span> PropertyValues <span class="m">postProcessProperties</span>(PropertyValues pvs<span class="k">,</span> Object bean<span class="k">,</span> String beanName) {  <span class="h">pvs: "PropertyValues: length=0"  bean: AnnotationDependencyInjectionResolutionDemo</span></pre>
<pre class="c" style="left:166px;top:346.8px;">        InjectionMetadata metadata = findAutowiringMetadata(beanName<span class="k">,</span> bean.getClass()<span class="k">,</span> pvs)<span class="k">;</span>  <span class="h">metadata<span>:</span> InjectionMetadata@2194  beanName: "annotationDependency"</span></pre>
<pre class="c" style="left:166px;top:398.8px;">        <span class="k">try</span> {</pre>
<pre class="c" style="left:166px;top:450.8px;">            metadata.inject(bean<span class="k">,</span> beanName<span class="k">,</span> pvs)<span class="k">;</span>  <span class="hx">metadata<span>:</span> InjectionMetadata@2194  bean: AnnotationDependencyInjectionResolutionDemo$$EnhancerBySpringCGLIB</span></pre>
<pre class="c" style="left:166px;top:502.8px;">        }</pre>
<pre class="c" style="left:166px;top:554.8px;">        <span class="k">catch</span> (BeanCreationException ex) {</pre>
<pre class="c" style="left:166px;top:606.8px;">            <span class="k">throw</span> ex<span class="k">;</span></pre>
<pre class="c" style="left:166px;top:658.8px;">        }</pre>
<pre class="c" style="left:166px;top:710.8px;">        <span class="k">catch</span> (Throwable ex) {</pre>
<pre class="c" style="left:166px;top:762.8px;">            <span class="k">throw</span> <span class="k">new</span> BeanCreationException(beanName<span class="k">,</span> <span class="s">"Injection of autowired dependencies failed"</span><span class="k">,</span> ex)<span class="k">;</span></pre>
<pre class="c" style="left:166px;top:814.8px;">        }</pre>
<pre class="c" style="left:166px;top:866.8px;">        <span class="k">return</span> pvs<span class="k">;</span></pre>
<pre class="c" style="left:166px;top:918.8px;">    }</pre>
<pre class="c" style="left:166px;top:1022.8px;">    <span class="a">@Deprecated</span></pre>
<svg style="left:662px;top:505px" width="490" height="125" viewBox="980 675 490 125"><polygon points="991,686.3 1008.7,682 1007.3,686.2 1453,789.6 1006.8,692.6 1006,697.2" fill="#f53b3b"/></svg>
<span class="t f" style="left:1185px;top:597.41px;font-size:32px;color:#f53b3b;font-family:'Noto Sans CJK SC','Liberation Sans',sans-serif;font-weight:500;">注入</span>
<div style="left:166px;top:1020px;width:2281px;height:1px;background:#515151;"></div>
<div style="left:167px;top:1021px;width:1016px;height:17px;background:#4e4e4e;"></div>
<div style="left:2504px;top:452px;width:17px;height:69px;background:rgba(140,146,152,0.42);"></div>
<div style="left:2494px;top:273px;width:28px;height:3px;background:#8c4f38;"></div>
<div style="left:2494px;top:481px;width:28px;height:3px;background:#8c4f38;"></div>
<div style="left:2494px;top:794px;width:28px;height:3px;background:#8c4f38;"></div>
<div style="left:2494px;top:883px;width:28px;height:3px;background:#8c4f38;"></div>
<svg style="left:2495px;top:2px" width="26" height="22" viewBox="0 0 26 22"><path d="M2 11L9 18L24 3" fill="none" stroke="#3fa556" stroke-width="4.2"/></svg>
</div>
<div style="left:2840px;top:116px;width:1px;height:1506px;background:#2f3133;"></div>
<span class="t" style="left:2850px;top:134px;font-size:27px;font-weight:700;font-style:italic;color:#b4b6b7">m</span>
<div style="left:2824.5px;top:187.5px;width:69px;height:40px;transform:rotate(90deg);transform-origin:50% 50%">
<span class="t f" style="left:0px;top:9.18px;font-size:24px;color:#bbbbbb;letter-spacing:-0.609px;">Maven</span>
</div>
<svg style="left:2847px;top:285px;" width="26" height="26" viewBox="0 0 26 26"><circle cx="13" cy="13" r="10.5" fill="none" stroke="#afb1b3" stroke-width="3"/><path d="M6 8c4-2 6 1 5 4s2 3 1 7c-4-1-7-5-6-11ZM15 4c5 0 8 4 7 8-3 1-5-1-5-3s-3-2-2-5Z" fill="#afb1b3"/></svg>
<div style="left:2800.5px;top:358.5px;width:117px;height:40px;transform:rotate(90deg);transform-origin:50% 50%">
<span class="t f" style="left:0px;top:9.18px;font-size:24px;color:#bbbbbb;letter-spacing:-0.158px;">RestfulTool</span>
</div>
<svg style="left:2846px;top:477px;" width="28" height="30" viewBox="0 0 28 30"><g fill="#afb1b3"><ellipse cx="14" cy="6" rx="12" ry="5"/><path d="M2 9.5c2 4 22 4 24 0v4c-2 4-22 4-24 0Z"/><path d="M2 16.5c2 4 22 4 24 0v4c-2 4-22 4-24 0Z"/><path d="M2 23.500c2 4 22 4 24 0v1c-2 6-22 6-24 0Z"/></g></svg>
<div style="left:2811.5px;top:543.5px;width:95px;height:40px;transform:rotate(90deg);transform-origin:50% 50%">
<span class="t f" style="left:0px;top:9.18px;font-size:24px;color:#bbbbbb;letter-spacing:-0.969px;">Database</span>
</div>
<svg style="left:2847px;top:649px;" width="26" height="28" viewBox="0 0 26 28"><g fill="#afb1b3" stroke="#afb1b3"><ellipse cx="13" cy="17" rx="5" ry="6.5"/><circle cx="13" cy="8" r="3.4"/><path d="M8 13L2 7M18 13l6-6M7 17H1M19 17h6M8 21l-5 6M18 21l5 6" stroke-width="2.2" fill="none"/></g></svg>
<div style="left:2840.5px;top:684.5px;width:37px;height:40px;transform:rotate(90deg);transform-origin:50% 50%">
<span class="t f" style="left:0px;top:9.18px;font-size:24px;color:#bbbbbb;letter-spacing:0.323px;">Ant</span>
</div>
<div style="left:44px;top:1210px;width:2796px;height:2px;background:#2f3133;"></div>
<div style="left:44px;top:1264px;width:2796px;height:2px;background:#2f3133;"></div>
<span class="t f" style="left:57px;top:1226.34px;font-size:25px;color:#bbbbbb;letter-spacing:0.229px;">Debug:</span>
<svg style="left:180px;top:1222px;" width="34" height="34" viewBox="0 0 34 34"><rect x="7" y="2" width="21" height="17" fill="none" stroke="#7f8b91" stroke-width="2"/><rect x="2" y="8" width="22" height="18" fill="#3c3f41" stroke="#9aa7ad" stroke-width="2"/><rect x="5" y="13" width="16" height="10" fill="#3e8ea9"/><circle cx="27" cy="28" r="4.4" fill="#1fe51f" stroke="#1f3a1f" stroke-width="1"/></svg>
<span class="t f" style="left:218px;top:1226.34px;font-size:25px;color:#bbbbbb;letter-spacing:0.510px;">AnnotationDependencyInjectionResolutio...</span>
<svg style="left:731px;top:1231px;" width="16" height="16" viewBox="0 0 16 16"><path d="M1 1L15 15M15 1L1 15" stroke="#7d8183" stroke-width="2" fill="none"/></svg>
<div style="left:154px;top:1260px;width:614px;height:5px;background:#747a80;"></div>
<svg style="left:2747px;top:1223px;" width="30" height="30" viewBox="0 0 30 30"><g transform="translate(15 15)"><g fill="#afb1b3"><rect x="-3.6" y="-14" width="7.2" height="8" transform="rotate(0)"/><rect x="-3.6" y="-14" width="7.2" height="8" transform="rotate(45)"/><rect x="-3.6" y="-14" width="7.2" height="8" transform="rotate(90)"/><rect x="-3.6" y="-14" width="7.2" height="8" transform="rotate(135)"/><rect x="-3.6" y="-14" width="7.2" height="8" transform="rotate(180)"/><rect x="-3.6" y="-14" width="7.2" height="8" transform="rotate(225)"/><rect x="-3.6" y="-14" width="7.2" height="8" transform="rotate(270)"/><rect x="-3.6" y="-14" width="7.2" height="8" transform="rotate(315)"/></g><circle r="9.8" fill="#afb1b3"/><circle r="4.4" fill="#3c3f41"/></g></svg>
<div style="left:2802px;top:1236px;width:25px;height:3px;background:#afb1b3;"></div>
<div style="left:100px;top:1266px;width:2px;height:354px;background:#2f3133;"></div>
<svg style="left:58px;top:1279px;" width="30" height="32" viewBox="0 0 30 32"><path d="M22 25A10.5 10.5 0 1 1 19 8.500" fill="none" stroke="#4aa35a" stroke-width="4.6"/><polygon points="15,0 29,9 15,18" fill="#4aa35a"/><rect x="17" y="20" width="11" height="11" fill="#b4b6b7"/></svg>
<div style="left:52px;top:1326px;width:40px;height:2px;background:#55585a;"></div>
<svg style="left:60px;top:1346px;" width="28" height="26" viewBox="0 0 28 26"><rect x="1" y="1" width="6.5" height="24" fill="#4aa35a"/><polygon points="12,1 27,13 12,25" fill="#4aa35a"/></svg>
<div style="left:64px;top:1400px;width:6px;height:23px;background:#6c6f71;"></div>
<div style="left:75px;top:1400px;width:6px;height:23px;background:#6c6f71;"></div>
<div style="left:62px;top:1454px;width:20px;height:20px;background:#c9514e;"></div>
<div style="left:52px;top:1496px;width:40px;height:2px;background:#55585a;"></div>
<svg style="left:58px;top:1514px;" width="30" height="30" viewBox="0 0 30 30"><circle cx="18.500" cy="9.500" r="8.500" fill="#c9514e"/><circle cx="10.500" cy="19" r="9.500" fill="#c9514e" stroke="#3c3f41" stroke-width="2"/></svg>
<span class="t f" style="left:64px;top:1589.49px;font-size:26px;color:#bbbbbb;letter-spacing:1.531px;">»</span>
<div style="left:102px;top:1321px;width:2738px;height:2px;background:#2f3133;"></div>
<span class="t f" style="left:128px;top:1281.34px;font-size:25px;color:#bbbbbb;letter-spacing:-0.352px;">Debugger</span>
<div style="left:102px;top:1318px;width:158px;height:4px;background:#747a80;"></div>
<svg style="left:286px;top:1283px;" width="24" height="22" viewBox="0 0 24 22"><rect width="24" height="22" fill="#b4b6b7"/><path d="M8 5.500L14 11L8 16.500" fill="none" stroke="#3c3f41" stroke-width="2.6"/></svg>
<span class="t f" style="left:322px;top:1281.34px;font-size:25px;color:#bbbbbb;letter-spacing:-0.819px;">Console</span>
<svg style="left:437px;top:1281px;" width="26" height="24" viewBox="0 0 26 24"><rect y="1" width="25" height="3.600" fill="#b4b6b7"/><rect y="9" width="25" height="5.500" fill="#3592c4"/><rect y="19" width="25" height="3.600" fill="#b4b6b7"/></svg>
<div style="left:482px;top:1272px;width:2px;height:40px;background:#55585a;"></div>
<svg style="left:501px;top:1276px;" width="30" height="30" viewBox="0 0 30 30"><path d="M3 16.5L13.5 6L22 14.5" fill="none" stroke="#3592c4" stroke-width="3.600"/><polygon points="13.5,20.5 27,20.5 27,7" fill="#3592c4"/><rect x="3" y="24" width="24" height="4" fill="#b4b6b7"/></svg>
<svg style="left:553px;top:1276px;" width="30" height="30" viewBox="0 0 30 30"><path d="M15 2V14" stroke="#3592c4" stroke-width="4.400"/><polygon points="6,11.5 24,11.5 15,21.5" fill="#3592c4"/><rect x="3" y="24" width="24" height="4" fill="#b4b6b7"/></svg>
<svg style="left:605px;top:1276px;" width="30" height="30" viewBox="0 0 30 30"><path d="M15 2V14" stroke="#c75450" stroke-width="4.400"/><polygon points="6,11.5 24,11.5 15,21.5" fill="#c75450"/><rect x="3" y="24" width="24" height="4" fill="#b4b6b7"/></svg>
<svg style="left:657px;top:1276px;" width="30" height="30" viewBox="0 0 30 30"><path d="M15 22V11" stroke="#3592c4" stroke-width="4.400"/><polygon points="6,13 24,13 15,3" fill="#3592c4"/><rect x="3" y="24" width="24" height="4" fill="#b4b6b7"/></svg>
<svg style="left:708px;top:1276px;" width="32" height="32" viewBox="0 0 32 32"><path d="M3.500 3.500L16 16M16 3.500L3.500 16" stroke="#c75450" stroke-width="4"/><path d="M18 11.500H26.500V26.500H11.500V18" fill="none" stroke="#b4b6b7" stroke-width="3.400"/></svg>
<svg style="left:760px;top:1276px;" width="34" height="34" viewBox="0 0 34 34"><path d="M4 4L14 14" stroke="#3592c4" stroke-width="4.200"/><polygon points="6.500,18 18,18 18,6.500" fill="#3592c4"/><path d="M20 15H29.500M24.750 15V30M20 30H29.500" stroke="#b4b6b7" stroke-width="2.200" fill="none"/></svg>
<div style="left:807px;top:1272px;width:2px;height:40px;background:#55585a;"></div>
<svg style="left:829px;top:1280px;" width="26" height="26" viewBox="0 0 26 26"><rect x="1.500" y="1.500" width="22" height="21" fill="none" stroke="#b4b6b7" stroke-width="3"/><rect x="1" y="1" width="23" height="7" fill="#b4b6b7"/><path d="M8.800 8V23M16.200 8V23M2 13H23M2 18H23" stroke="#b4b6b7" stroke-width="2"/></svg>
<svg style="left:881px;top:1282px;" width="28" height="22" viewBox="0 0 28 22"><g fill="#5e6163"><rect y="0" width="10" height="3.600"/><rect x="16" y="0" width="11" height="3.600"/><rect y="9" width="27" height="3.600"/><rect y="18" width="10" height="3.600"/><rect x="16" y="18" width="11" height="3.600"/></g><path d="M17 -1L10 23" stroke="#5e6163" stroke-width="2.400"/></svg>
<svg style="left:2800px;top:1281px;" width="32" height="32" viewBox="0 0 32 32"><rect x="0" y="0" width="13" height="10" fill="#b4b6b7"/><rect x="15" y="0" width="9" height="10" fill="#b4b6b7"/><rect x="0" y="12" width="24" height="9" fill="#b4b6b7"/><polygon points="18,24 30,24 24,30" fill="#e0e0e0"/></svg>
<span class="t f" style="left:128px;top:1336.34px;font-size:25px;color:#bbbbbb;letter-spacing:-1.456px;">Frames</span>
<span class="t f" style="left:572px;top:1336.34px;font-size:25px;color:#bbbbbb;letter-spacing:-0.819px;">Variables</span>
<div style="left:102px;top:1374px;width:2738px;height:2px;background:#2f3133;"></div>
<div style="left:544px;top:1323px;width:2px;height:297px;background:#2f3133;"></div>
<div style="left:108px;top:1382px;width:262px;height:44px;border:2px solid #5d6062;border-radius:7px;box-sizing:content-box"></div>
<svg style="left:122px;top:1394px;" width="34" height="28" viewBox="0 0 34 28"><path d="M3 15L11 24L30 4" fill="none" stroke="#c8643a" stroke-width="5"/></svg>
<span class="t f" style="left:161px;top:1394.49px;font-size:26px;color:#bbbbbb;letter-spacing:-0.132px;">"mai...NNING</span>
<svg style="left:342px;top:1402px;" width="20" height="11" viewBox="0 0 20 11"><polygon points="0,0 19,0 9.500,11" fill="#a0a3a5"/></svg>
<svg style="left:399px;top:1390px;" width="24" height="30" viewBox="0 0 24 30"><path d="M12 28V4M3 13L12 3L21 13" fill="none" stroke="#5e6163" stroke-width="3"/></svg>
<svg style="left:450px;top:1390px;" width="24" height="30" viewBox="0 0 24 30"><path d="M12 2V26M3 17L12 27L21 17" fill="none" stroke="#b4b6b7" stroke-width="3"/></svg>
<svg style="left:501px;top:1393px;" width="28" height="26" viewBox="0 0 28 26"><polygon points="0,0 26,0 16,12 16,25 10,25 10,12" fill="#b4b6b7"/></svg>
<div style="left:102px;top:1436px;width:442px;height:2px;background:#2f3133;"></div>
<div class="clip" style="left:102px;top:1440px;width:442px;height:180px;overflow:hidden;">
<div style="left:0px;top:0px;width:442px;height:42px;background:#4b6eaf;"></div>
<div style="left:0px;top:42px;width:442px;height:138px;background:#4f4b41;"></div>
<span class="t f" style="left:33px;top:8.49px;font-size:26px;color:#d2d6dc;letter-spacing:-0.494px;">postProcessProperties:399, Autowired</span>
<span class="t f" style="left:33px;top:50.49px;font-size:26px;color:#858580;letter-spacing:-0.288px;">populateBean:1422, AbstractAutowire</span>
<span class="t f" style="left:33px;top:91.99px;font-size:26px;color:#858580;letter-spacing:-0.495px;">doCreateBean:594, AbstractAutowire</span>
<span class="t f" style="left:33px;top:133.49px;font-size:26px;color:#858580;letter-spacing:-0.564px;">createBean:517, AbstractAutowireCapable</span>
<span class="t f" style="left:33px;top:175.49px;font-size:26px;color:#858580;">lambda$doGetBean$0:323, AbstractBeanFactory</span>
<div style="left:423px;top:0px;width:19px;height:54px;background:rgba(160,164,170,0.40);"></div>
<div style="left:2px;top:162px;width:126px;height:16px;background:rgba(150,150,150,0.55);"></div>
</div>
<div style="left:594px;top:1376px;width:2px;height:244px;background:#2f3133;"></div>
<svg style="left:559px;top:1391px;" width="22" height="22" viewBox="0 0 22 22"><path d="M11 0V22M0 11H22" stroke="#b4b6b7" stroke-width="3.600"/></svg>
<div style="left:560px;top:1452px;width:20px;height:3px;background:#5e6163;"></div>
<svg style="left:557px;top:1499px;" width="26" height="14" viewBox="0 0 26 14"><polygon points="0,13 13,0 26,13" fill="#5e6163"/></svg>
<svg style="left:557px;top:1551px;" width="26" height="14" viewBox="0 0 26 14"><polygon points="0,0 26,0 13,13" fill="#5e6163"/></svg>
<span class="t f" style="left:563px;top:1591.49px;font-size:26px;color:#bbbbbb;letter-spacing:1.531px;">»</span>
<svg style="left:602px;top:1387px;" width="17" height="21" viewBox="0 0 17 21"><polygon points="0,0 16,10 0,20" fill="#adafb0"/></svg>
<svg style="left:642px;top:1386px;" width="21" height="23" viewBox="0 0 21 23"><g fill="#b98e3e"><rect y="0" width="21" height="5"/><rect y="8.500" width="21" height="5"/><rect y="17" width="21" height="5"/></g></svg>
<span class="t f" style="left:675px;top:1384.49px;font-size:26px;color:#f28b82;letter-spacing:-0.117px;">this</span>
<span class="t f" style="left:723px;top:1384.49px;font-size:26px;color:#bbbbbb;letter-spacing:-1.188px;">=</span>
<span class="t f" style="left:747px;top:1384.49px;font-size:26px;color:#8b8b8b;letter-spacing:-0.194px;">{AutowiredAnnotationBeanPostProcessor@1986}</span>
<svg style="left:602px;top:1427px;" width="17" height="21" viewBox="0 0 17 21"><polygon points="0,0 16,10 0,20" fill="#adafb0"/></svg>
<svg style="left:637px;top:1423px;" width="30" height="30" viewBox="0 0 30 30"><circle cx="15" cy="15" r="14.300" fill="#b98e3e"/></svg>
<span class="t" style="left:645.5px;top:1426px;font-size:23px;color:#3a2c10">p</span>
<span class="t f" style="left:675px;top:1424.49px;font-size:26px;color:#f28b82;letter-spacing:-0.823px;">pvs</span>
<span class="t f" style="left:721px;top:1424.49px;font-size:26px;color:#bbbbbb;letter-spacing:-1.188px;">=</span>
<span class="t f" style="left:745px;top:1424.49px;font-size:26px;color:#8b8b8b;letter-spacing:-0.141px;">{MutablePropertyValues@2216}</span>
<span class="t f" style="left:1119px;top:1424.49px;font-size:26px;color:#d0d0d0;letter-spacing:0.068px;">"PropertyValues: length=0"</span>
<svg style="left:602px;top:1467px;" width="17" height="21" viewBox="0 0 17 21"><polygon points="0,0 16,10 0,20" fill="#adafb0"/></svg>
<svg style="left:637px;top:1463px;" width="30" height="30" viewBox="0 0 30 30"><circle cx="15" cy="15" r="14.300" fill="#b98e3e"/></svg>
<span class="t" style="left:645.5px;top:1466px;font-size:23px;color:#3a2c10">p</span>
<span class="t f" style="left:675px;top:1464.49px;font-size:26px;color:#f28b82;letter-spacing:-0.461px;">bean</span>
<span class="t f" style="left:739px;top:1464.49px;font-size:26px;color:#bbbbbb;letter-spacing:-1.188px;">=</span>
<span class="t f" style="left:763px;top:1464.49px;font-size:26px;color:#8b8b8b;letter-spacing:-0.279px;">{AnnotationDependencyInjectionResolutionDemo$$EnhancerBySpringCGLIB$$9475d71@2207}</span>
<svg style="left:602px;top:1507px;" width="17" height="21" viewBox="0 0 17 21"><polygon points="0,0 16,10 0,20" fill="#adafb0"/></svg>
<svg style="left:637px;top:1503px;" width="30" height="30" viewBox="0 0 30 30"><circle cx="15" cy="15" r="14.300" fill="#b98e3e"/></svg>
<span class="t" style="left:645.5px;top:1506px;font-size:23px;color:#3a2c10">p</span>
<span class="t f" style="left:675px;top:1504.49px;font-size:26px;color:#f28b82;letter-spacing:-0.275px;">beanName</span>
<span class="t f" style="left:808px;top:1504.49px;font-size:26px;color:#bbbbbb;letter-spacing:-1.188px;">=</span>
<span class="t f" style="left:832px;top:1504.49px;font-size:26px;color:#659c57;letter-spacing:0.112px;">"annotationDependencyInjectionResolutionDemo"</span>
<svg style="left:602px;top:1547px;" width="17" height="21" viewBox="0 0 17 21"><polygon points="0,0 16,10 0,20" fill="#adafb0"/></svg>
<svg style="left:642px;top:1546px;" width="21" height="23" viewBox="0 0 21 23"><g fill="#b98e3e"><rect y="0" width="21" height="5"/><rect y="8.500" width="21" height="5"/><rect y="17" width="21" height="5"/></g></svg>
<span class="t f" style="left:675px;top:1544.49px;font-size:26px;color:#f28b82;letter-spacing:-0.176px;">metadata</span>
<span class="t f" style="left:790px;top:1544.49px;font-size:26px;color:#bbbbbb;letter-spacing:-1.188px;">=</span>
<span class="t f" style="left:814px;top:1544.49px;font-size:26px;color:#8b8b8b;letter-spacing:-0.077px;">{InjectionMetadata@2194}</span>
<div style="left:0px;top:1620px;width:2880px;height:2px;background:#2f3133;"></div>
<div style="left:170px;top:1622px;width:172px;height:42px;background:#2d2f31;"></div>
<div style="left:0px;top:1664px;width:2880px;height:2px;background:#333537;"></div>
<svg style="left:65px;top:1632px;" width="24" height="26" viewBox="0 0 24 26"><path d="M3 2V25M3 14H15V5" fill="none" stroke="#afb1b3" stroke-width="3.400"/><polygon points="7,9 15,0 23,9" fill="#afb1b3"/></svg>
<span class="t f" style="left:96px;top:1633.94px;font-size:25px;color:#bbbbbb;letter-spacing:-0.625px;"><u style="text-underline-offset:3px;text-decoration-thickness:2px">9</u>: Git</span>
<svg style="left:192px;top:1631px;" width="27" height="27" viewBox="0 0 32 32"><g fill="#afb1b3"><ellipse cx="14" cy="18" rx="9" ry="11"/><path d="M8 3l4 6M20 3l-4 6" stroke="#afb1b3" stroke-width="2.600" fill="none"/><path d="M1 12h8M19 12h8M0 19h8M20 19h8M2 26h8M18 26h8" stroke="#afb1b3" stroke-width="2.600"/></g><circle cx="26" cy="27" r="4.400" fill="#1fe51f" stroke="#1f3a1f" stroke-width="1"/></svg>
<span class="t f" style="left:226px;top:1633.94px;font-size:25px;color:#ffffff;letter-spacing:-0.559px;"><u style="text-underline-offset:3px;text-decoration-thickness:2px">5</u>: Debug</span>
<svg style="left:367px;top:1634px;" width="24" height="20" viewBox="0 0 24 20"><g fill="#afb1b3"><rect x="0" y="0" width="4" height="4"/><rect x="7" y="0" width="15" height="4"/><rect x="0" y="8" width="4" height="4"/><rect x="7" y="8" width="15" height="4"/><rect x="0" y="16" width="4" height="4"/><rect x="7" y="16" width="15" height="4"/></g></svg>
<span class="t f" style="left:398px;top:1633.94px;font-size:25px;color:#bbbbbb;letter-spacing:-1.161px;"><u style="text-underline-offset:3px;text-decoration-thickness:2px">6</u>: TODO</span>
<svg style="left:529px;top:1630px;" width="30" height="28" viewBox="0 0 30 28"><path d="M27 1c1 12-3 22-14 22c-5 0-9-1-11-3c6-1 12-3 16-8c-5 3-10 5-16 5c0-9 10-14 25-16Z" fill="#afb1b3"/></svg>
<span class="t f" style="left:564px;top:1633.94px;font-size:25px;color:#bbbbbb;letter-spacing:-0.544px;">Spring</span>
<svg style="left:677px;top:1632px;" width="26" height="24" viewBox="0 0 26 24"><rect width="25" height="23" fill="#afb1b3"/><path d="M5 6L11 11L5 16" fill="none" stroke="#3c3f41" stroke-width="2.400"/><path d="M12 17H20" stroke="#3c3f41" stroke-width="2.400"/></svg>
<span class="t f" style="left:709px;top:1633.94px;font-size:25px;color:#bbbbbb;letter-spacing:-0.186px;">Terminal</span>
<svg style="left:2681px;top:1631px;" width="28" height="30" viewBox="0 0 28 30"><circle cx="14" cy="14" r="11.500" fill="none" stroke="#afb1b3" stroke-width="3"/></svg>
<span class="t f" style="left:2716px;top:1633.94px;font-size:25px;color:#bbbbbb;letter-spacing:-0.955px;">Event Log</span>
<svg style="left:11px;top:1673px;" width="26" height="26" viewBox="0 0 26 26"><rect x="6.500" y="1.500" width="18" height="18" fill="none" stroke="#afb1b3" stroke-width="2.400"/><path d="M1.500 6V24.500H20" fill="none" stroke="#afb1b3" stroke-width="2.400"/></svg>
<span class="t f" style="left:54px;top:1673.94px;font-size:25px;color:#bbbbbb;letter-spacing:0.446px;">All files are up-to-date (15 minutes ago)</span>
<span class="t f" style="left:2350px;top:1673.94px;font-size:25px;color:#bbbbbb;letter-spacing:-0.512px;">399:1</span>
<span class="t f" style="left:2437px;top:1673.94px;font-size:25px;color:#8f9193;letter-spacing:-2.594px;">LF</span>
<span class="t f" style="left:2487px;top:1673.94px;font-size:25px;color:#8f9193;letter-spacing:-0.966px;">UTF-8</span>
<div style="left:0px;top:1703px;width:2880px;height:3px;background:#a3a8ad;"></div>
<div style="left:2572px;top:1653px;width:306px;height:49px;background:#ffffff;border-radius:8px;box-shadow:0 0 3px rgba(0,0,0,.35)"></div>
<div style="left:2838px;top:1660px;width:36px;height:38px;border-radius:6px;background:linear-gradient(180deg,#fff6d8,#e4f3ff 50%,#d8fff4)"></div>
<svg style="left:2520px;top:1640px;" width="72" height="68" viewBox="0 0 72 68"><defs><linearGradient id="sg" x1="0" y1="0" x2="0" y2="1"><stop offset="0" stop-color="#fb7238"/><stop offset="1" stop-color="#ef4a0d"/></linearGradient></defs><g transform="rotate(-14 36 34)"><rect x="9" y="7" width="54" height="54" rx="9" fill="url(#sg)"/><path d="M51 20C40 14 22 17 20 26C18 36 50 32 48 43C46 52 27 52 17 46" fill="none" stroke="#ffffff" stroke-width="8.500" stroke-linecap="butt"/></g></svg>
<span class="t f" style="left:2599px;top:1664.95px;font-size:29px;color:#0b6fe0;font-family:'Noto Sans CJK SC','Liberation Sans',sans-serif;font-weight:700;">中</span>
<svg style="left:2650px;top:1664px;" width="30" height="30" viewBox="0 0 30 30"><circle cx="6" cy="8" r="4" fill="#0b6fe0"/><circle cx="22" cy="18" r="3.600" fill="#0b6fe0"/><path d="M22 20c1 3-1 6-4 8" stroke="#0b6fe0" stroke-width="2.400" fill="none"/></svg>
<svg style="left:2697px;top:1660px;" width="28" height="38" viewBox="0 0 28 38"><rect x="8" y="1" width="12" height="22" rx="6" fill="#0b6fe0"/><path d="M3 16c0 14 22 14 22 0" fill="none" stroke="#0b6fe0" stroke-width="2.600"/><path d="M14 27V33M8 34H20" stroke="#0b6fe0" stroke-width="2.600"/></svg>
<svg style="left:2744px;top:1664px;" width="32" height="28" viewBox="0 0 32 28"><rect x="1.500" y="1.500" width="29" height="24" rx="3" fill="none" stroke="#0b6fe0" stroke-width="3"/><path d="M9 2V18M16 2V18M23 2V18M2 10H30M2 18H30" stroke="#0b6fe0" stroke-width="2.400"/></svg>
<svg style="left:2791px;top:1662px;" width="36" height="32" viewBox="0 0 36 32"><path d="M10 1C13 6 23 6 26 1L35 7L30 15L27 13V31H9V13L6 15L1 7Z" fill="#0b6fe0"/></svg>
<svg style="left:2842px;top:1664px;" width="30" height="32" viewBox="0 0 30 32"><defs><linearGradient id="pg" x1="0" y1="0" x2="1" y2="1"><stop offset="0" stop-color="#7a6cf0"/><stop offset="1" stop-color="#4f7df5"/></linearGradient></defs><rect x="1" y="1" width="12" height="12" rx="3" fill="url(#pg)"/><rect x="16.500" y="2.500" width="10" height="10" rx="3" fill="none" stroke="url(#pg)" stroke-width="3"/><rect x="1" y="16" width="12" height="12" rx="3" fill="url(#pg)"/><rect x="15" y="16" width="13" height="12" rx="3" fill="url(#pg)"/></svg>
<span class="t f" style="left:2654px;top:1677.57px;font-size:20px;color:rgba(125,125,125,0.9);letter-spacing:-1.755px;text-shadow:0 0 2px rgba(255,255,255,.9)">CSDN @</span>
<span class="t f" style="left:2727px;top:1677.57px;font-size:20px;color:rgba(125,125,125,0.9);letter-spacing:-0.286px;text-shadow:0 0 2px rgba(255,255,255,.9)">只因为你而温柔</span>
</body></html>
